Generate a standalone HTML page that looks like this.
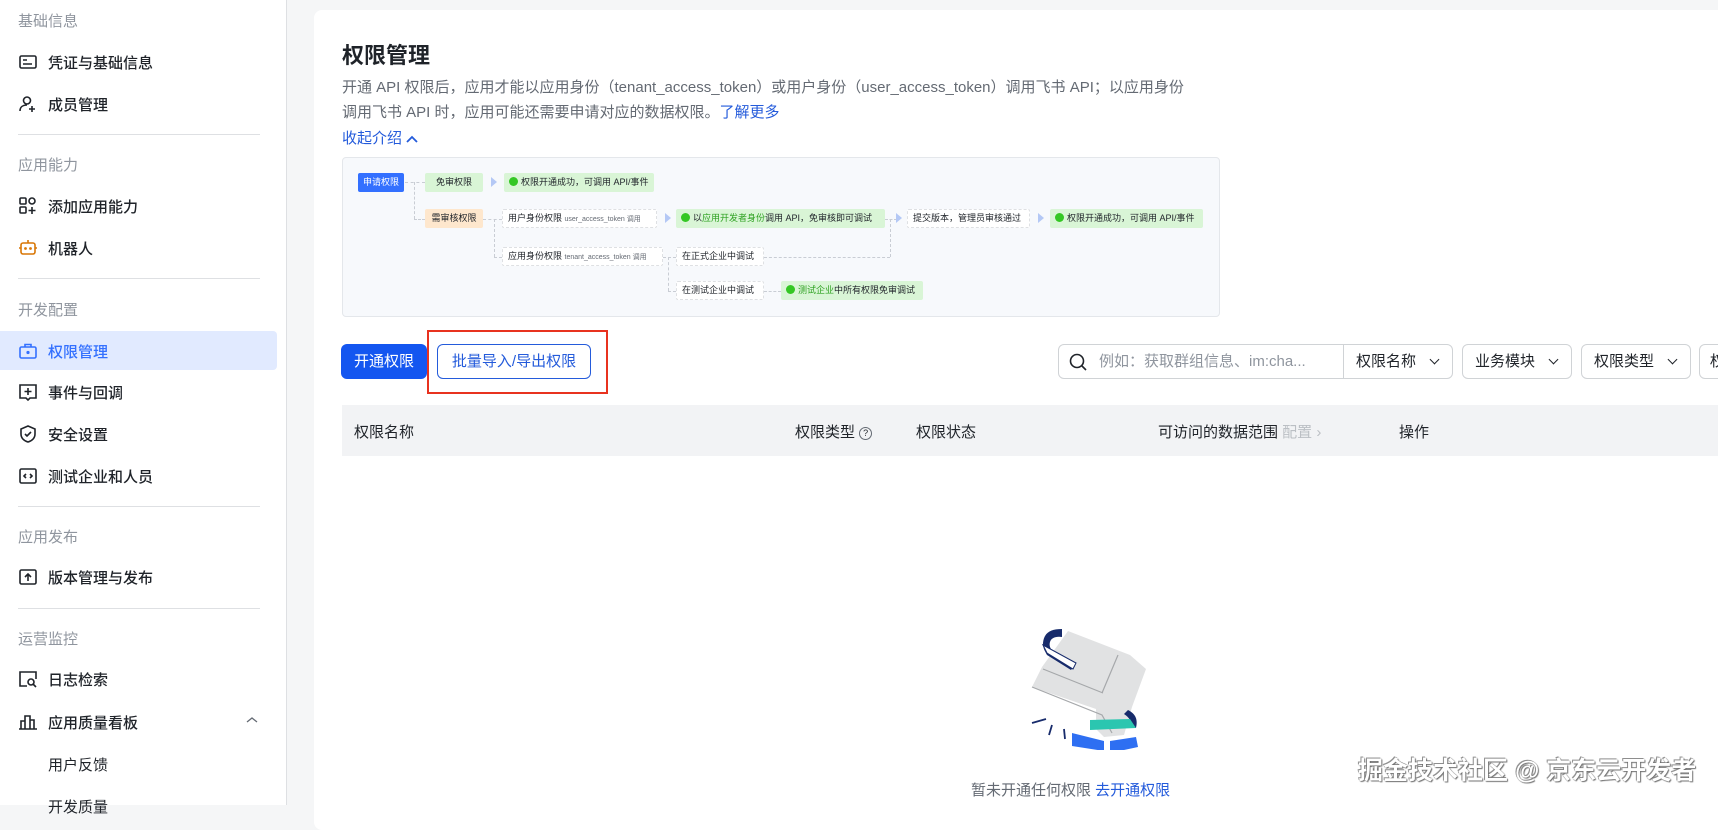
<!DOCTYPE html>
<html><head><meta charset="utf-8"><style>
*{margin:0;padding:0;box-sizing:border-box}
body{width:1718px;height:805px;overflow:hidden;background:#f5f6f7;font-family:"Liberation Sans","Noto Sans CJK SC",sans-serif;color:#1f2329;position:relative}
.abs{position:absolute}
#side{position:absolute;left:0;top:0;width:287px;height:805px;background:#fff;border-right:1px solid #dee0e3}
.sec{position:absolute;left:18px;font-size:15px;color:#8f959e}
.it{position:absolute;left:48px;font-size:15px;color:#1f2329;font-weight:500}
.ic{position:absolute;left:18px;width:20px;height:20px}
.dv{position:absolute;left:18px;width:242px;height:1px;background:#dee0e3}
#card{position:absolute;left:314px;top:10px;width:1420px;height:820px;background:#fff;border-radius:8px}
.nd{position:absolute;height:19px;line-height:19px;font-size:9px;padding:0 5px;white-space:nowrap;border-radius:2px}
.g{background:#d9f5d6;color:#1f2329}
.w{background:#fff;border:1px dashed #dee0e3;line-height:17px}
.ck{display:inline-block;width:9px;height:9px;border-radius:50%;background:#34c724;vertical-align:-1px;margin-right:3px}
.ar{position:absolute;width:0;height:0;border-left:6px solid #b4c8f5;border-top:5px solid transparent;border-bottom:5px solid transparent}
.ln{position:absolute;border-top:1px dashed #c9cdd4}
.lv{position:absolute;border-left:1px dashed #c9cdd4}
.dd{position:absolute;top:344px;height:35px;border:1px solid #d0d3d6;border-radius:6px;font-size:15px;line-height:33px;padding-left:12px;background:#fff}
.arr:after{content:"";position:absolute;right:14px;top:11px;width:6px;height:6px;border-right:1.5px solid #1f2329;border-bottom:1.5px solid #1f2329;transform:rotate(45deg)}
.th{position:absolute;top:421px;font-size:15px;color:#1f2329}
</style></head><body>
<div id="side">
<div class="sec" style="top:10px">基础信息</div>
<svg class="ic" style="top:52px" viewBox="0 0 20 20" fill="none" stroke="#1f2329" stroke-width="1.6"><rect x="2" y="4" width="16" height="12" rx="1.5"/><path d="M5 8h4M5 12h9"/></svg>
<div class="it" style="top:52px">凭证与基础信息</div>
<svg class="ic" style="top:94px" viewBox="0 0 20 20" fill="none" stroke="#1f2329" stroke-width="1.6"><circle cx="9" cy="6.5" r="3.5"/><path d="M2 17c0-4 3-6 7-6M14 12v6M11 15h6"/></svg>
<div class="it" style="top:94px">成员管理</div>
<div class="dv" style="top:134px"></div>
<div class="sec" style="top:154px">应用能力</div>
<svg class="ic" style="top:196px" viewBox="0 0 20 20" fill="none" stroke="#1f2329" stroke-width="1.6"><rect x="2" y="2" width="6" height="6" rx="1"/><rect x="2" y="11" width="6" height="6" rx="1"/><circle cx="14" cy="5" r="3"/><path d="M14 11v7M10.5 14.5h7"/></svg>
<div class="it" style="top:196px">添加应用能力</div>
<svg class="ic" style="top:238px" viewBox="0 0 20 20" fill="none" stroke="#d97706" stroke-width="1.6"><rect x="3" y="5" width="14" height="11" rx="2"/><path d="M10 2v3M1 10h2M17 10h2"/><circle cx="7.5" cy="10.5" r=".6" fill="#d97706"/><circle cx="12.5" cy="10.5" r=".6" fill="#d97706"/></svg>
<div class="it" style="top:238px">机器人</div>
<div class="dv" style="top:278px"></div>
<div class="sec" style="top:299px">开发配置</div>
<div class="abs" style="left:0;top:331px;width:277px;height:39px;background:#e1eaff;border-radius:0 4px 4px 0"></div>
<svg class="ic" style="top:341px" viewBox="0 0 20 20" fill="none" stroke="#3370ff" stroke-width="1.6"><rect x="2" y="6" width="16" height="11" rx="1.5"/><path d="M7 6V3.5h6V6"/><circle cx="10" cy="11.5" r=".8" fill="#3370ff"/></svg>
<div class="it" style="top:341px;color:#3370ff">权限管理</div>
<svg class="ic" style="top:382px" viewBox="0 0 20 20" fill="none" stroke="#1f2329" stroke-width="1.6"><path d="M2 3h16v13h-6l-2 2-2-2H2z"/><path d="M10 6v7M6.5 9.5h7"/></svg>
<div class="it" style="top:382px">事件与回调</div>
<svg class="ic" style="top:424px" viewBox="0 0 20 20" fill="none" stroke="#1f2329" stroke-width="1.6"><path d="M10 2l7 3v5c0 4-3 7-7 8-4-1-7-4-7-8V5z"/><path d="M7 10l2 2 4-4"/></svg>
<div class="it" style="top:424px">安全设置</div>
<svg class="ic" style="top:466px" viewBox="0 0 20 20" fill="none" stroke="#1f2329" stroke-width="1.6"><rect x="2" y="3" width="16" height="14" rx="1.5"/><path d="M8 8l-2 2 2 2M12 8l2 2-2 2"/></svg>
<div class="it" style="top:466px">测试企业和人员</div>
<div class="dv" style="top:506px"></div>
<div class="sec" style="top:526px">应用发布</div>
<svg class="ic" style="top:567px" viewBox="0 0 20 20" fill="none" stroke="#1f2329" stroke-width="1.6"><rect x="2" y="3" width="16" height="14" rx="1.5"/><path d="M10 14V7M7 10l3-3 3 3"/></svg>
<div class="it" style="top:567px">版本管理与发布</div>
<div class="dv" style="top:608px"></div>
<div class="sec" style="top:628px">运营监控</div>
<svg class="ic" style="top:669px" viewBox="0 0 20 20" fill="none" stroke="#1f2329" stroke-width="1.6"><path d="M9 17H2V3h16v7"/><circle cx="13" cy="13" r="3"/><path d="M15 15l3 3"/></svg>
<div class="it" style="top:669px">日志检索</div>
<svg class="ic" style="top:712px" viewBox="0 0 20 20" fill="none" stroke="#1f2329" stroke-width="1.6"><path d="M1 17h18M3 17V9h4v8M7 17V4h5v13M12 17V8h4v9"/></svg>
<div class="it" style="top:712px">应用质量看板</div>
<svg class="abs" style="left:246px;top:716px" width="12" height="8" viewBox="0 0 12 8" fill="none" stroke="#646a73" stroke-width="1.3"><path d="M1 6l5-4 5 4"/></svg>
<div class="it" style="top:754px;font-weight:400">用户反馈</div>
<div class="it" style="top:796px;font-weight:400">开发质量</div>
</div>
<div id="card"></div>
<div class="abs" style="left:342px;top:38px;font-size:22px;font-weight:600">权限管理</div>
<div class="abs" style="left:342px;top:75px;font-size:15px;color:#646a73;line-height:25px;width:900px">开通 API 权限后，应用才能以应用身份（tenant_access_token）或用户身份（user_access_token）调用飞书 API；以应用身份<br>调用飞书 API 时，应用可能还需要申请对应的数据权限。<span style="color:#245bdb">了解更多</span></div>
<div class="abs" style="left:342px;top:127px;font-size:15px;color:#245bdb">收起介绍 <svg width="12" height="8" viewBox="0 0 12 8" fill="none" stroke="#245bdb" stroke-width="1.8"><path d="M1 7l5-5 5 5"/></svg></div>
<div class="abs" style="left:342px;top:157px;width:878px;height:160px;background:#f7f9fc;border:1px solid #e4e7eb;border-radius:4px"></div>
<div class="ln" style="left:405px;top:182px;width:20px"></div>
<div class="lv" style="left:414px;top:182px;height:37px"></div>
<div class="ln" style="left:414px;top:219px;width:11px"></div>
<div class="ln" style="left:483px;top:219px;width:19px"></div>
<div class="lv" style="left:494px;top:219px;height:38px"></div>
<div class="ln" style="left:494px;top:257px;width:8px"></div>
<div class="ln" style="left:663px;top:257px;width:13px"></div>
<div class="lv" style="left:668px;top:257px;height:34px"></div>
<div class="ln" style="left:668px;top:291px;width:8px"></div>
<div class="ln" style="left:764px;top:257px;width:126px"></div>
<div class="lv" style="left:890px;top:219px;height:38px"></div>
<div class="ln" style="left:885px;top:219px;width:12px"></div>
<div class="ln" style="left:764px;top:291px;width:17px"></div>
<div class="nd" style="left:358px;top:173px;background:#3370ff;color:#fff">申请权限</div>
<div class="nd g" style="left:425px;top:173px;width:58px;text-align:center">免审权限</div>
<div class="ar" style="left:491px;top:177px"></div>
<div class="nd g" style="left:504px;top:173px"><span class="ck"></span>权限开通成功，可调用 API/事件</div>
<div class="nd" style="left:425px;top:209px;width:58px;text-align:center;background:#fee7cd">需审核权限</div>
<div class="nd w" style="left:502px;top:209px;width:155px">用户身份权限 <span style="font-size:7px;color:#646a73">user_access_token 调用</span></div>
<div class="ar" style="left:665px;top:213px"></div>
<div class="nd g" style="left:676px;top:209px;width:209px"><span class="ck"></span>以<span style="color:#2ea121">应用开发者身份</span>调用 API，免审核即可调试</div>
<div class="ar" style="left:896px;top:213px"></div>
<div class="nd w" style="left:907px;top:209px;width:123px">提交版本，管理员审核通过</div>
<div class="ar" style="left:1038px;top:213px"></div>
<div class="nd g" style="left:1050px;top:209px;width:153px"><span class="ck"></span>权限开通成功，可调用 API/事件</div>
<div class="nd w" style="left:502px;top:247px;width:161px">应用身份权限 <span style="font-size:7px;color:#646a73">tenant_access_token 调用</span></div>
<div class="nd w" style="left:676px;top:247px;width:88px">在正式企业中调试</div>
<div class="nd w" style="left:676px;top:281px;width:88px">在测试企业中调试</div>
<div class="nd g" style="left:781px;top:281px;width:142px"><span class="ck"></span><span style="color:#2ea121">测试企业</span>中所有权限免审调试</div>
<div class="abs" style="left:341px;top:344px;width:86px;height:35px;background:#1456f0;border-radius:6px;color:#fff;font-size:15px;line-height:35px;text-align:center">开通权限</div>
<div class="abs" style="left:437px;top:344px;width:154px;height:35px;border:1px solid #245bdb;border-radius:6px;color:#245bdb;font-size:15px;line-height:33px;text-align:center">批量导入/导出权限</div>
<div class="abs" style="left:427px;top:330px;width:181px;height:64px;border:2px solid #e8321f"></div>
<div class="dd" style="left:1058px;width:286px;border-radius:6px 0 0 6px;color:#8f959e;padding-left:40px">例如：获取群组信息、im:cha...</div>
<svg class="abs" style="left:1068px;top:352px" width="20" height="20" viewBox="0 0 20 20" fill="none" stroke="#1f2329" stroke-width="1.6"><circle cx="9" cy="9" r="6.5"/><path d="M14 14l4 4"/></svg>
<div class="dd arr" style="left:1343px;width:110px;border-radius:0 6px 6px 0">权限名称</div>
<div class="dd arr" style="left:1462px;width:110px">业务模块</div>
<div class="dd arr" style="left:1581px;width:110px">权限类型</div>
<div class="abs" style="left:1699px;top:344px;width:40px;height:35px;border:1px solid #d0d3d6;border-radius:6px;font-size:15px;line-height:33px;padding-left:10px">权</div>
<div class="abs" style="left:342px;top:405px;width:1380px;height:51px;background:#f2f3f5"></div>
<div class="th" style="left:354px">权限名称</div>
<div class="th" style="left:795px">权限类型 <span style="display:inline-block;width:13px;height:13px;border:1.3px solid #646a73;border-radius:50%;font-size:9px;line-height:11px;text-align:center;vertical-align:1px">?</span></div>
<div class="th" style="left:916px">权限状态</div>
<div class="th" style="left:1158px">可访问的数据范围 <span style="color:#bbbfc4">配置 ›</span></div>
<div class="th" style="left:1399px">操作</div>
<svg class="abs" style="left:1010px;top:625px" width="140" height="125" viewBox="0 0 140 125">
<path d="M58 6l62 24 16 14-14 38-8 28-20 2-8-8 0-20L22 62l10-20z" fill="#e1e2e3"/>
<path d="M108 30L92 68M22 62l70 28 10 18M33 44l60 24" stroke="#a6a8ab" stroke-width="1.2" fill="none"/>
<path d="M52 4c-12 0-18 4-19 14 0 6 2 8 4 12l24 15 4-5-22-14c-3-2-4-6-3-9 1-4 6-6 12-5z" fill="#172b6b"/>
<path d="M33 20l4 8 26 16 3-6z" fill="#fff" stroke="#172b6b" stroke-width="1"/>
<path d="M118 85c8 4 10 10 8 18l-6 0c2-6 0-10-6-14z" fill="#172b6b"/>
<path d="M80 95l40-1 6 9-46 2z" fill="#2bc6b0"/>
<path d="M62 108l32 8 0 10-32-5z" fill="#2e6ff2"/>
<path d="M100 116l26-4 2 10-28 6z" fill="#2e6ff2"/>
<path d="M22 98l14-4M42 100l-3 10M54 104l1 10" stroke="#172b6b" stroke-width="1.8"/>
</svg>
<div class="abs" style="left:971px;top:779px;font-size:15px;color:#646a73">暂未开通任何权限 <span style="color:#245bdb">去开通权限</span></div>
<div class="abs" style="left:1358px;top:751px;font-size:25px;font-weight:600;color:#fff;text-shadow:0 0 1px #555,1px 1px 1px #777,-1px -1px 0 #999;white-space:nowrap">掘金技术社区 @ 京东云开发者</div>
</body></html>
